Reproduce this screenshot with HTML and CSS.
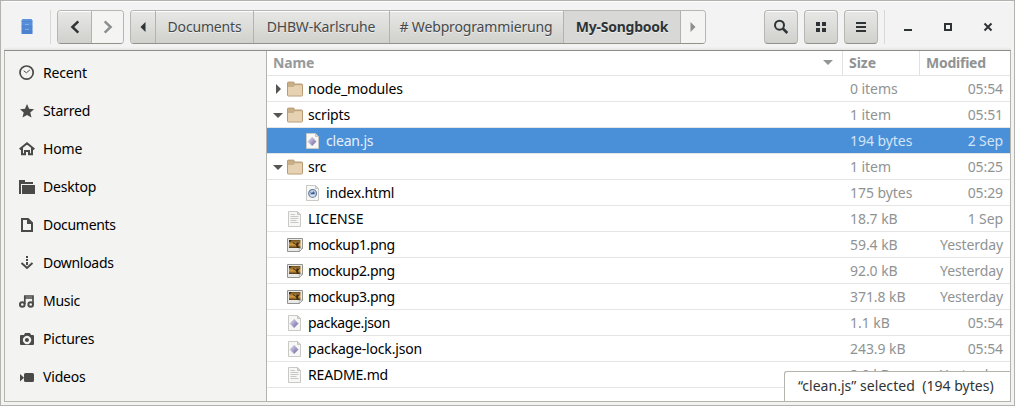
FILE: index.html
```html
<!DOCTYPE html>
<html lang="en">
<head>
<meta charset="utf-8">
<title>My-Songbook</title>
<link rel="stylesheet" href="styles.css">
</head>
<body>
<svg class="defs" width="0" height="0">
  <defs>
    <linearGradient id="gem" x1="0" y1="0" x2="1" y2="1"><stop offset="0" stop-color="#e0e3f2"/><stop offset=".5" stop-color="#a59fc9"/><stop offset="1" stop-color="#77559d"/></linearGradient>
    <linearGradient id="drawer" x1="0" y1="0" x2="0" y2="1"><stop offset="0" stop-color="#5d94df"/><stop offset="1" stop-color="#4b82cf"/></linearGradient>
    <linearGradient id="sunset" x1="0" y1="0" x2="0" y2="1"><stop offset="0" stop-color="#6d5227"/><stop offset=".6" stop-color="#d79c3c"/><stop offset="1" stop-color="#4b3515"/></linearGradient>
    <symbol id="page" viewBox="0 0 16 16"><path d="M1.5.5h9l3 3v12h-12z" fill="#f7f7f5" stroke="#c9cac6"/><path d="M10.5.5v3h3z" fill="#d9dad7" stroke="#c3c5c0"/></symbol>
    <symbol id="folder" viewBox="0 0 16 16"><path d="M.5 2q0-.9.9-.9h5q.8 0 .8.9v1h7.4q.9 0 .9.9v10q0 1.1-.9 1.1H1.4q-.9 0-.9-1z" fill="#c9af87" stroke="#b89b75"/><path d="M1 6h5.5l1.3-1.7H15v10.2H1z" fill="#e6d1b3"/></symbol>
    <symbol id="code" viewBox="0 0 16 16"><use href="#page"/><path d="M7.2 4.4 11.2 8.6 7.2 12.8 3.2 8.6z" fill="url(#gem)" stroke="#aaa4cb" stroke-width=".7"/></symbol>
    <symbol id="html" viewBox="0 0 16 16"><use href="#page"/><circle cx="7.6" cy="8.4" r="3.9" fill="#c3d0e2" stroke="#5f779d" stroke-width="1.1"/><path d="M5.2 6.6 6.9 8 8.5 6.2l1.5 2-1 1.1H6.1z" fill="#42608e"/><path d="M5.6 10.8h4" stroke="#e8f0f7"/></symbol>
    <symbol id="text" viewBox="0 0 16 16"><use href="#page"/><path d="M3.5 3.5H8M3.5 5.5h8M3.5 7.5h8M3.5 9.5h6M3.5 11.5h8" stroke="#c8c9c6"/></symbol>
    <symbol id="image" viewBox="0 0 16 16"><path d="M.5 1.5h15v10l-3 3H.5z" fill="#e9eae7" stroke="#92948f"/><path d="M2 3h11.5v8H2z" fill="url(#sunset)"/><path d="m6 5 3 2 1-2 1 1 2-1-2 3 1 3h-2L9 8 6 6zM2 3h3L3 5H2z" fill="#3d2c14"/><path d="M12.3 14.5v-3.2h3.2z" fill="#fff" stroke="#969894" stroke-width=".7"/></symbol>
  </defs>
</svg>
<div class="window">
  <header class="headerbar">
    <svg class="app-icon" viewBox="0 0 12 16"><path d="M1.5 0h9l1 1.5V15H.5V1.5z" fill="url(#drawer)"/><path d="M.5 2.5h11M.5 7.5h11M.5 12h11" stroke="#4179c8" stroke-width=".5"/><path d="M4 5.5h4M4 10.5h4" stroke="#94b9e9" stroke-width=".7"/></svg>
    <i class="separator"></i>
    <div class="group navigation">
      <button class="button back"><svg class="icon" viewBox="0 0 16 16"><path d="M11.3 2.4 5.4 8l5.9 5.6" class="stroke bold"/></svg></button>
      <button class="button flat forward"><svg class="icon muted" viewBox="0 0 16 16"><path d="M4.7 2.4 10.6 8l-5.9 5.6" class="stroke bold"/></svg></button>
    </div>
    <nav class="group path">
      <button class="button previous"><svg class="icon" viewBox="0 0 16 16"><path d="M10.5 3v10l-5-5z"/></svg></button>
      <button class="button crumb documents"><span>Documents</span></button>
      <button class="button crumb dhbw"><span>DHBW-Karlsruhe</span></button>
      <button class="button crumb web"><span># Webprogrammierung</span></button>
      <button class="button crumb current"><span>My-Songbook</span></button>
      <button class="button flat next"><svg class="icon muted" viewBox="0 0 16 16"><path d="M5.5 3v10l5-5z"/></svg></button>
    </nav>
    <div class="tools">
      <button class="button tool"><svg class="icon" viewBox="0 0 16 16"><circle cx="6.5" cy="6.2" r="4.5" class="stroke"/><path d="m9.8 9.5 4.5 4.5" class="stroke bold"/></svg></button>
      <button class="button tool"><svg class="icon" viewBox="0 0 16 16"><path d="M3 3h4v4H3zM9 3h4v4H9zM3 9h4v4H3zM9 9h4v4H9z"/></svg></button>
      <button class="button tool"><svg class="icon" viewBox="0 0 16 16"><path d="M3 3h10v2H3zM3 7h10v2H3zM3 11h10v2H3z"/></svg></button>
    </div>
    <i class="separator right"></i>
    <div class="controls">
      <svg class="icon" viewBox="0 0 16 16"><path d="M4 10h8v2H4z"/></svg>
      <svg class="icon" viewBox="0 0 16 16"><path d="M5 5h6v6H5z" class="stroke"/></svg>
      <svg class="icon" viewBox="0 0 16 16"><path d="m4.5 4.5 7 7m0-7-7 7" class="stroke"/></svg>
    </div>
  </header>
  <main class="content">
    <aside class="sidebar">
      <a class="place"><svg class="icon" viewBox="0 0 16 16"><circle cx="7.6" cy="7.6" r="6.6" class="stroke thin"/><path d="m4.7 5.8 2.7 2L10.8 5" class="stroke hairline"/></svg><span>Recent</span></a>
      <a class="place"><svg class="icon" viewBox="0 0 16 16"><path d="m8 1 2.1 4.7 5 .5-3.8 3.3 1.2 5L8 12l-4.5 2.5 1.2-5L1 6.2l5-.5z"/></svg><span>Starred</span></a>
      <a class="place"><svg class="icon" viewBox="0 0 16 16"><path d="m.7 8.2 7.3-6 7.3 6M3 7v6.2h3V10h4v3.2h3V7" class="stroke"/></svg><span>Home</span></a>
      <a class="place"><svg class="icon" viewBox="0 0 16 16"><path d="M0 1h6v2h8v2H2v10H0z"/><path d="M3 6h13v9H3z"/></svg><span>Desktop</span></a>
      <a class="place tight"><svg class="icon" viewBox="0 0 16 16"><path d="M3 2h6l4 4v8H3z" class="stroke"/><path d="M8 1v6h5z"/></svg><span>Documents</span></a>
      <a class="place tight"><svg class="icon" viewBox="0 0 16 16"><path d="M7 1h2v2H7zM7 4h2v2H7zM7 7h2v3H7z"/><path d="m2.5 8 5.5 5 5.5-5" class="stroke"/></svg><span>Downloads</span></a>
      <a class="place tight"><svg class="icon" viewBox="0 0 16 16"><circle cx="3.3" cy="11.5" r="2.3" class="stroke"/><circle cx="11.7" cy="11.5" r="2.3" class="stroke"/><path d="M5.8 11V3H14v8.5M6 5h8" class="stroke thin"/></svg><span>Music</span></a>
      <a class="place"><svg class="icon" viewBox="0 0 16 16"><path fill-rule="evenodd" d="M2 4h3l1-2h5l1 2h2q1 0 1 1v8q0 1-1 1H2q-1 0-1-1V5q0-1 1-1m6 .8a4.2 4.2 0 1 0 .1 0M8 7a2 2 0 1 1-.1 0"/></svg><span>Pictures</span></a>
      <a class="place"><svg class="icon" viewBox="0 0 16 16"><path d="M6.500 4h7q1.500 0 1.500 1.500v6q0 1.500-1.500 1.500h-7q-1.500 0-1.500-1.500v-6q0-1.500 1.500-1.500M1 5l4 3.800-4 3.700z"/></svg><span>Videos</span></a>
    </aside>
    <section class="files">
      <div class="row heading"><div class="name"><span>Name</span><svg class="sort" viewBox="0 0 10 6"><path d="M0 0h10L5 5z"/></svg></div><div class="size"><span>Size</span></div><div class="date"><span>Modified</span></div></div>
      <div class="row"><div class="name"><svg class="expander" viewBox="0 0 12 12"><path d="M4 1v10l5-5z"/></svg><svg class="file"><use href="#folder"/></svg><span>node_modules</span></div><div class="size">0 items</div><div class="date">05:54</div></div>
      <div class="row"><div class="name"><svg class="expander" viewBox="0 0 12 12"><path d="M1 4h10L6 9z"/></svg><svg class="file"><use href="#folder"/></svg><span>scripts</span></div><div class="size">1 item</div><div class="date">05:51</div></div>
      <div class="row selected"><div class="name child"><svg class="file"><use href="#code"/></svg><span>clean.js</span></div><div class="size">194 bytes</div><div class="date">2 Sep</div></div>
      <div class="row"><div class="name"><svg class="expander" viewBox="0 0 12 12"><path d="M1 4h10L6 9z"/></svg><svg class="file"><use href="#folder"/></svg><span>src</span></div><div class="size">1 item</div><div class="date">05:25</div></div>
      <div class="row"><div class="name child"><svg class="file"><use href="#html"/></svg><span>index.html</span></div><div class="size">175 bytes</div><div class="date">05:29</div></div>
      <div class="row"><div class="name leaf"><svg class="file"><use href="#text"/></svg><span class="license">LICENSE</span></div><div class="size">18.7 kB</div><div class="date">1 Sep</div></div>
      <div class="row"><div class="name leaf"><svg class="file"><use href="#image"/></svg><span class="mockup">mockup1.png</span></div><div class="size">59.4 kB</div><div class="date">Yesterday</div></div>
      <div class="row"><div class="name leaf"><svg class="file"><use href="#image"/></svg><span class="mockup">mockup2.png</span></div><div class="size">92.0 kB</div><div class="date">Yesterday</div></div>
      <div class="row"><div class="name leaf"><svg class="file"><use href="#image"/></svg><span class="mockup">mockup3.png</span></div><div class="size">371.8 kB</div><div class="date">Yesterday</div></div>
      <div class="row"><div class="name leaf"><svg class="file"><use href="#code"/></svg><span class="mockup">package.json</span></div><div class="size">1.1 kB</div><div class="date">05:54</div></div>
      <div class="row"><div class="name leaf"><svg class="file"><use href="#code"/></svg><span>package-lock.json</span></div><div class="size">243.9 kB</div><div class="date">05:54</div></div>
      <div class="row"><div class="name leaf"><svg class="file"><use href="#text"/></svg><span>README.md</span></div><div class="size">2.0 kB</div><div class="date">Yesterday</div></div>
      <div class="status"><span>“clean.js” selected&nbsp; (194 bytes)</span></div>
    </section>
  </main>
</div>
</body>
</html>
```

FILE: styles.css
```css
* { box-sizing: border-box; }
body { margin: 0; overflow: hidden; font: 14px/20px "Noto Sans", "Open Sans", sans-serif; letter-spacing: -.18px; color: #000; }
button { font: inherit; letter-spacing: inherit; padding: 0; margin: 0; }
svg { display: block; flex: none; }
.defs { position: absolute; }
.window { width: 1015px; height: 406px; border: 1px solid #b3b2af; padding: 0 3px 3px; background: #f3f3f2; display: flex; flex-direction: column; }
.headerbar { height: 49px; flex: none; display: flex; align-items: flex-start; padding: 9px 0 0 17px; background: linear-gradient(#fff 0 1px, #f3f3f3 1px 46px, #e4e4e2); }
.app-icon { width: 12px; height: 16px; margin-top: 9px; }
.separator { width: 1px; height: 34px; background: #d8d8d6; margin-left: 17px; }
.group { display: flex; border: 1px solid #b6b6b3; border-bottom-color: #929289; border-radius: 4px; height: 34px; overflow: hidden; }
.navigation { margin-left: 6px; width: 67px; }
.path { margin-left: 6px; width: 576px; }
.button { border: 0; color: #2e3436; background: linear-gradient(#fff 0 1px, #e7e7e5 1px, #d0d0cd); display: flex; align-items: center; justify-content: center; height: 32px; text-shadow: 0 1px #eee; }
.button.flat { background: #f4f4f3; }
.group > * + * { border-left: 1px solid #b2b2af; }
.back { width: 33px; } .forward { width: 32px; }
.previous { width: 24px; } .documents { width: 98px; } .dhbw { width: 136px; } .web { width: 174px; } .current { width: 117px; } .next { width: 25px; }
.crumb { color: #45494a; padding-bottom: 1px; }
.dhbw, .web { letter-spacing: -.15px; padding-right: 1px; }
.crumb.current { background: #d8d8d6; font-weight: bold; color: #2e3436; letter-spacing: -.25px; }
.icon { width: 16px; height: 16px; color: #2e3436; fill: currentColor; }
.muted { color: #8c8f8f; }
.stroke { fill: none; stroke: currentColor; stroke-width: 2; }
.bold { stroke-width: 2.5; } .thin { stroke-width: 1.7; } .hairline { stroke-width: 1; }
.tools { display: flex; gap: 6px; margin-left: 58px; }
.tool { width: 34px; height: 34px; border: 1px solid #b6b6b3; border-bottom-color: #929289; border-radius: 4px; }
.separator.right { margin-left: 6px; }
.controls { display: flex; gap: 24px; margin: 9px 0 0 15px; }
.content { height: 352px; flex: none; display: grid; grid-template-columns: 262px 1fr; border: 1px solid #b4b4af; border-top-color: #8e8e86; }
.sidebar { width: 262px; padding-top: 3px; border-right: 1px solid #b4b4af; background: #f3f3f2; overflow: hidden; }
.place { height: 38px; display: flex; align-items: center; gap: 8px; padding-left: 14px; }
.place .icon { color: #4a4a48; }
.place.tight { letter-spacing: -.3px; }
.files { position: relative; overflow: hidden; background: white; }
.row { height: 26px; border-bottom: 1px solid #e5e5e4; display: grid; grid-template-columns: 575px 77px 1fr; align-items: center; }
.row.heading { height: 25px; font-weight: bold; color: #979a9b; }
.name { display: flex; align-items: center; padding-left: 5px; }
.name .file { width: 16px; height: 16px; margin: 0 5px 0 3px; }
.leaf { padding-left: 17px; } .child { padding-left: 35px; }
.license { letter-spacing: .1px; } .mockup { letter-spacing: -.35px; }
.expander { width: 12px; height: 12px; fill: #555652; }
.size { padding-left: 8px; color: #909393; letter-spacing: -.05px; }
.date { padding-right: 7px; text-align: right; color: #909393; letter-spacing: -.1px; }
.heading .name { padding: 0 9px 0 6px; justify-content: space-between; }
.heading > .size { border-left: 1px solid #e1e1e0; padding-left: 6px; height: 24px; line-height: 24px; }
.heading > .date { border-left: 1px solid #e1e1e0; text-align: left; padding: 0 0 0 6px; height: 24px; line-height: 24px; letter-spacing: -.25px; }
.sort { width: 10px; height: 6px; fill: #929595; }
.selected, .selected .size, .selected .date { background: #4a90d9; color: #e7f0fa; }
.selected .size, .selected .date { color: #d3e4f6; }
.status { position: absolute; right: 0; bottom: 0; width: 226px; height: 30px; border: solid #b4b4af; border-width: 1px 0 0 1px; border-top-left-radius: 3px; padding: 4px 0 0 13px; white-space: nowrap; background: white; color: #2e3436; letter-spacing: .04px; }
```
